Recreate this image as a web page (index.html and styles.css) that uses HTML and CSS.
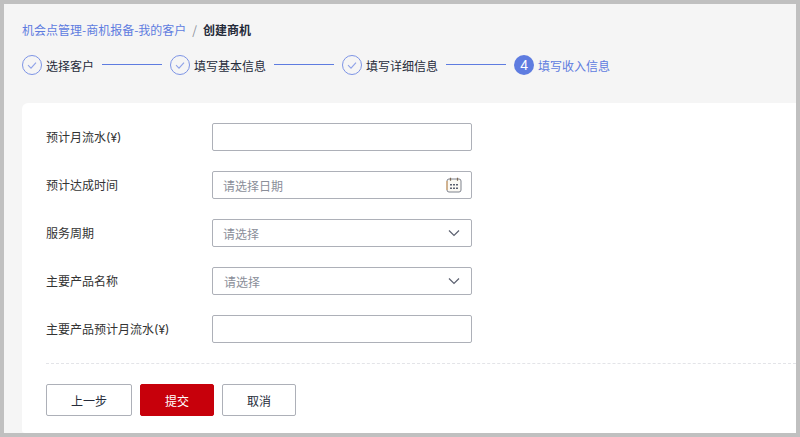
FILE: index.html
```html
<!DOCTYPE html>
<html lang="zh">
<head>
<meta charset="utf-8">
<title>创建商机</title>
<link rel="stylesheet" href="styles.css">
</head>
<body>
<div class="frame">
  <nav class="crumbs"><a class="crumb-link">机会点管理-商机报备-我的客户</a><span class="crumb-sep">/</span><strong class="crumb-now">创建商机</strong></nav>
  <ol class="steps">
    <li class="step"><svg class="check" viewBox="0 0 20 20"><circle cx="10" cy="10" r="9.5"/><path d="M6 10.2l3 3 5-5.6"/></svg><span>选择客户</span></li>
    <li class="line"></li>
    <li class="step"><svg class="check" viewBox="0 0 20 20"><circle cx="10" cy="10" r="9.5"/><path d="M6 10.2l3 3 5-5.6"/></svg><span>填写基本信息</span></li>
    <li class="line"></li>
    <li class="step"><svg class="check" viewBox="0 0 20 20"><circle cx="10" cy="10" r="9.5"/><path d="M6 10.2l3 3 5-5.6"/></svg><span>填写详细信息</span></li>
    <li class="line"></li>
    <li class="step current"><span class="num">4</span><span>填写收入信息</span></li>
  </ol>
  <main class="card">
    <form class="form">
      <div class="row"><label class="label">预计月流水(¥)</label><div class="field"></div></div>
      <div class="row"><label class="label">预计达成时间</label><div class="field"><span class="ph">请选择日期</span>
        <svg class="cal" viewBox="0 0 16 16"><rect x="1" y="2" width="14" height="13" rx="2" class="cal-o"/><path class="cal-l" d="M1 4v9"/><path class="cal-t" d="M4.500 .8v3M11.500 .8v3"/><path class="cal-d" d="M4 7h2v1.500H4zM7 7h2v1.500H7zM10 7h2v1.500h-2zM4 10.500h2V12H4zM7 10.500h2V12H7zM10 10.500h2V12h-2z"/></svg></div></div>
      <div class="row"><label class="label">服务周期</label><div class="field"><span class="ph">请选择</span>
        <svg class="chev" viewBox="0 0 12 8"><path d="M1 1.500l5 5 5-5"/></svg></div></div>
      <div class="row"><label class="label">主要产品名称</label><div class="field field-wide"><span class="ph">请选择</span>
        <svg class="chev" viewBox="0 0 12 8"><path d="M1 1.500l5 5 5-5"/></svg></div></div>
      <div class="row"><label class="label">主要产品预计月流水(¥)</label><div class="field"></div></div>
      <div class="actions">
        <button type="button" class="btn prev">上一步</button>
        <button type="button" class="btn submit">提交</button>
        <button type="button" class="btn cancel">取消</button>
      </div>
    </form>
  </main>
</div>
</body>
</html>
```
FILE: styles.css
```css
* { box-sizing: border-box; }
html, body { margin: 0; height: 100%; }
body {
  width: 800px;
  height: 437px;
  overflow: hidden;
  font-family: "Noto Sans CJK SC", "Liberation Sans", sans-serif;
  font-size: 12px;
  color: #333;
  background: #f5f5f5;
}
.frame {
  width: 800px;
  height: 437px;
  border: 4px solid #c0c0c0;
  background: #f5f5f5;
  padding: 18px 0 0 18px;
  display: flex;
  flex-direction: column;
}
.crumbs { display: flex; align-items: center; height: 16px; line-height: 16px; }
.crumb-link { color: #5e7ce0; }
.crumb-sep { color: #8a8e99; margin: 0 6px; }
.crumb-now { color: #252b3a; font-weight: 700; }
.steps {
  list-style: none;
  margin: 17px 0 0;
  padding: 0;
  display: flex;
  align-items: center;
  height: 20px;
}
.step { display: flex; align-items: center; gap: 4px; color: #252b3a; line-height: 20px; }
.step > span:last-child { padding-top: 2px; }
.check { width: 20px; height: 20px; flex: none; }
.check circle { fill: none; stroke: #7d94e5; stroke-width: 1; }
.check path { fill: none; stroke: #8fa2e8; stroke-width: 1.1; }
.line { width: 60px; height: 1px; background: #5e7ce0; margin: 0 8px 2px; }
.num {
  width: 20px;
  height: 20px;
  border-radius: 50%;
  background: #5e7ce0;
  color: #fff;
  font-family: "Liberation Sans", sans-serif;
  font-size: 14px;
  line-height: 20px;
  text-align: center;
}
.current { color: #5e7ce0; }
.card {
  margin-top: 28px;
  flex: 1;
  background: #fff;
  border-radius: 6px 0 0 3px;
  padding: 20px 0 0 24px;
}
.row { display: flex; align-items: center; height: 28px; margin-bottom: 20px; }
.label {
  width: 166px;
  color: #333;
  flex: none;
  font-family: Inter, "Noto Sans CJK SC", sans-serif;
  line-height: 16px;
  padding-top: 2px;
}
.field {
  width: 260px;
  height: 28px;
  border: 1px solid #adb0b8;
  border-radius: 2px;
  padding: 0 10px;
  display: flex;
  align-items: center;
  justify-content: space-between;
  background: #fff;
}
.field-wide { padding-left: 11px; }
.ph { color: #8a8e99; }
.cal { width: 16px; height: 16px; margin-right: -1px; }
.cal-o { fill: #fbf9f4; stroke: #7f838e; stroke-width: 1; }
.cal-l { fill: none; stroke: #e2a45c; stroke-width: 1; }
.cal-t { fill: none; stroke: #7f6a55; stroke-width: 1.2; }
.cal-d { fill: #5c6170; }
.chev { width: 12px; height: 8px; margin-right: 1px; }
.chev path { fill: none; stroke: #5c6170; stroke-width: 1.2; }
.actions {
  border-top: 1px dashed #e3e4e8;
  padding-top: 20px;
  display: flex;
  gap: 8px;
}
.btn {
  height: 32px;
  font: inherit;
  border: 1px solid #adb0b8;
  border-radius: 2px;
  background: #fff;
  color: #252b3a;
  padding: 0;
}
.prev { width: 86px; }
.submit { width: 74px; background: #c7000b; border-color: #c7000b; color: #fff; }
.cancel { width: 74px; }
```
